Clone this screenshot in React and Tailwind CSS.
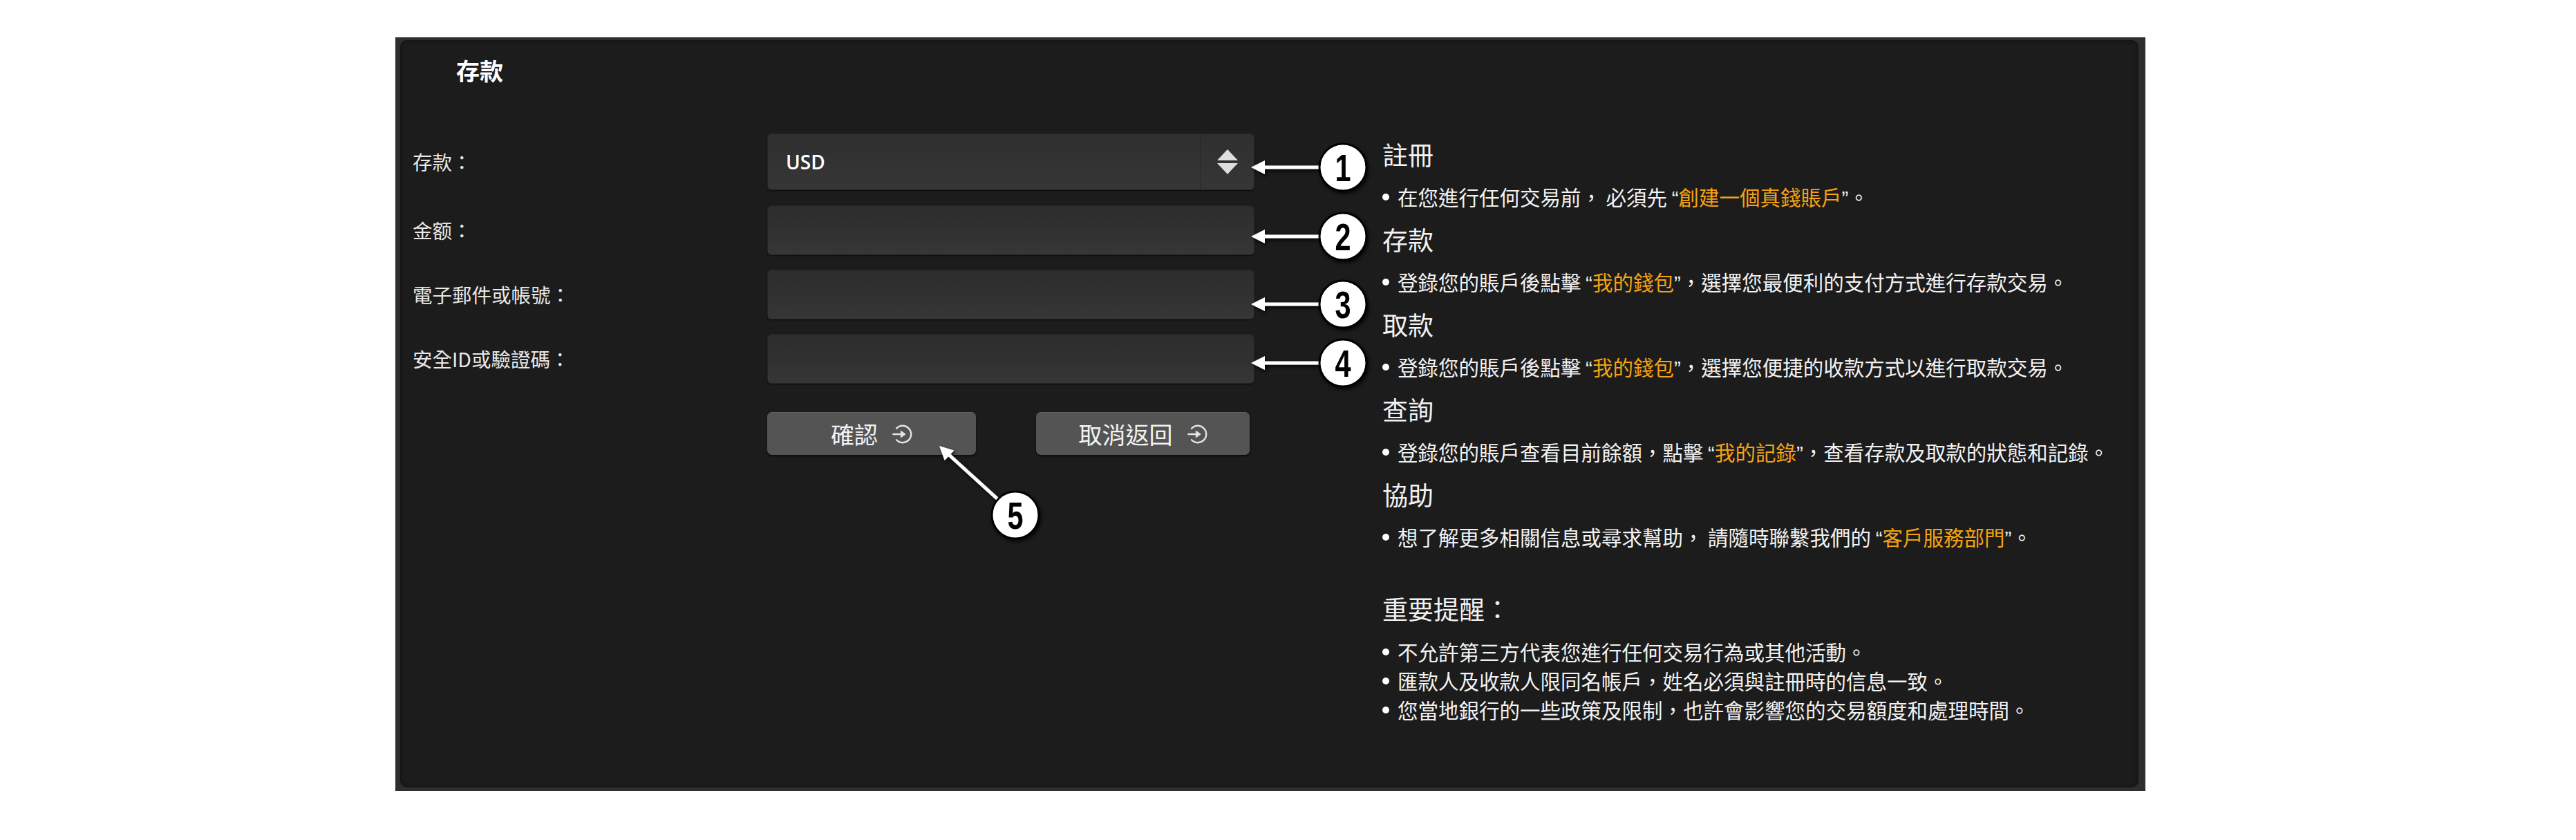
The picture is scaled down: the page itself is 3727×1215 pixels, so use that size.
const steps = [
  {
    title: '註冊',
    text: ['在您進行任何交易前， 必須先 ', '創建一個真錢賬戶', '。'],
  },
  {
    title: '存款',
    text: ['登錄您的賬戶後點擊 ', '我的錢包', '，選擇您最便利的支付方式進行存款交易。'],
  },
  {
    title: '取款',
    text: ['登錄您的賬戶後點擊 ', '我的錢包', '，選擇您便捷的收款方式以進行取款交易。'],
  },
  {
    title: '查詢',
    text: ['登錄您的賬戶查看目前餘額，點擊 ', '我的記錄', '，查看存款及取款的狀態和記錄。'],
  },
  {
    title: '協助',
    text: ['想了解更多相關信息或尋求幫助， 請隨時聯繫我們的 ', '客戶服務部門', '。'],
  },
];

const notes = [
  '不允許第三方代表您進行任何交易行為或其他活動。',
  '匯款人及收款人限同名帳戶，姓名必須與註冊時的信息一致。',
  '您當地銀行的一些政策及限制，也許會影響您的交易額度和處理時間。',
];

const fields = ['金额：', '電子郵件或帳號：', '安全ID或驗證碼：'];

// callout markers drawn over the screenshot
const marks = [
  { n: 1, cx: 1943, cy: 242 },
  { n: 2, cx: 1943, cy: 342 },
  { n: 3, cx: 1943, cy: 440 },
  { n: 4, cx: 1943, cy: 525 },
  { n: 5, cx: 1469, cy: 745 },
];

const EnterIcon = () => (
  <svg viewBox="0 0 32 32" className="w-[30px] h-[30px]" fill="none" stroke="#e4e4e4" strokeWidth="2.6" strokeLinecap="round">
    <path d="M7.5 7.2 A13 13 0 1 1 7.5 24.8" />
    <path d="M2.5 16 H17" />
    <path d="M14.5 11 L21.5 16 L14.5 21 Z" fill="#e4e4e4" strokeWidth="1" strokeLinejoin="round" />
  </svg>
);

const Bullet = ({ children }) => (
  <div className="flex items-center">
    <span className="w-[10px] h-[10px] rounded-full bg-white shrink-0" />
    <span className="ml-[12px]">{children}</span>
  </div>
);

const Q = ({ children }) => (
  <span className="font-['Liberation_Sans',sans-serif]">{children}</span>
);

const Annotations = () => (
  <svg className="absolute inset-0 pointer-events-none" width="3727" height="1215">
    <defs>
      <filter id="shade" x="-30%" y="-30%" width="160%" height="160%">
        <feDropShadow dx="2" dy="3" stdDeviation="2.5" floodColor="#000" floodOpacity="0.8" />
      </filter>
    </defs>
    <g filter="url(#shade)">
      {marks.slice(0, 4).map((m) => (
        <g key={m.n}>
          <line x1="1826" y1={m.cy} x2="1910" y2={m.cy} stroke="#fff" strokeWidth="5" />
          <polygon points={`1810,${m.cy} 1830,${m.cy - 10} 1830,${m.cy + 10}`} fill="#fff" />
        </g>
      ))}
      <line x1="1443" y1="721.5" x2="1371" y2="656" stroke="#fff" strokeWidth="5" />
      <polygon points="1359,645 1380.4,651.4 1366.7,666" fill="#fff" />
      {marks.map((m) => (
        <g key={m.n}>
          <circle cx={m.cx} cy={m.cy} r="34" fill="#fff" stroke="#000" strokeWidth="3" />
          <text
            transform={`translate(${m.cx} ${m.cy + 20}) scale(0.74 1)`}
            textAnchor="middle"
            fontFamily="Liberation Sans, Arial, sans-serif"
            fontWeight="700"
            fontSize="56"
            fill="#000"
          >
            {m.n}
          </text>
        </g>
      ))}
    </g>
  </svg>
);

export default function App() {
  return (
    <div className="relative w-[3727px] h-[1215px] bg-white overflow-hidden font-['Noto_Sans_CJK_TC','Noto_Sans_CJK_SC',sans-serif]">
      <div className="ml-[572px] mt-[54px] w-[2532px] h-[1090px] bg-[#2e2e2e] pt-[4px] pl-[7px] pr-[10px] pb-[5px]">
        <div className="h-full rounded-[10px] bg-[#1c1c1c] pt-[27px] pl-[18px] shadow-[inset_0_0_6px_rgba(0,0,0,0.5)]">
          <h1 className="pl-[63px] text-[34px] leading-[34px] font-bold text-white">存款</h1>

          <div className="mt-[74px] flex">
            {/* Form */}
            <div className="w-[1218px] shrink-0">
              <div className="flex items-center">
                <label className="w-[513px] text-[28.5px] text-[#e8e8e8]">存款：</label>
                <div className="w-[705px] h-[82px] flex rounded-[6px] border border-[#262626] bg-gradient-to-b from-[#2f2f2f] to-[#363636] shadow-[0_1px_2px_rgba(0,0,0,0.6)]">
                  <div className="flex-1 flex items-center pl-[26px] font-['Open_Sans',sans-serif] font-semibold text-[28px] text-white">
                    USD
                  </div>
                  <div className="w-[78px] border-l border-[#272727] flex flex-col items-center justify-center gap-[4px]">
                    <svg viewBox="0 0 30 16" className="w-[30px] h-[16px]"><polygon points="15,0 30,16 0,16" fill="#dedede" /></svg>
                    <svg viewBox="0 0 30 16" className="w-[30px] h-[16px]"><polygon points="0,0 30,0 15,16" fill="#dedede" /></svg>
                  </div>
                </div>
              </div>

              {fields.map((f, i) => (
                <div key={f} className={`flex items-center ${i === 0 ? 'mt-[22px]' : 'mt-[21px]'}`}>
                  <label className="w-[513px] text-[28.5px] text-[#e8e8e8]">{f}</label>
                  <div className="w-[705px] h-[72px] rounded-[6px] border border-[#262626] bg-gradient-to-b from-[#2c2c2c] to-[#363636] shadow-[0_1px_2px_rgba(0,0,0,0.6)]" />
                </div>
              ))}

              <div className="mt-[41px] pl-[513px] flex gap-[87px]">
                <button className="w-[302px] h-[62px] rounded-[7px] bg-[#545454] border-t border-[#616161] shadow-[0_2px_3px_rgba(0,0,0,0.6)] flex items-center justify-center gap-[20px] text-[34px] text-[#f2f2f2]">
                  確認 <EnterIcon />
                </button>
                <button className="w-[309px] h-[62px] rounded-[7px] bg-[#545454] border-t border-[#616161] shadow-[0_2px_3px_rgba(0,0,0,0.6)] flex items-center justify-center gap-[20px] text-[34px] text-[#f2f2f2]">
                  取消返回 <EnterIcon />
                </button>
              </div>
            </div>

            {/* Guide */}
            <div className="ml-[185px] text-[#f2f2f2]">
              {steps.map((s) => (
                <div key={s.title}>
                  <div className="h-[61.5px] flex items-center text-[37px]">{s.title}</div>
                  <div className="h-[61.5px] flex items-center text-[29.5px]">
                    <Bullet>
                      {s.text[0]}
                      <Q>“</Q>
                      <span className="text-[#f5a312]">{s.text[1]}</span>
                      <Q>”</Q>
                      {s.text[2]}
                    </Bullet>
                  </div>
                </div>
              ))}

              <div className="mt-[42px] h-[61.5px] flex items-center text-[37px]">重要提醒：</div>
              <div className="mt-[10px] text-[29.5px]">
                {notes.map((n) => (
                  <div key={n} className="h-[42px] flex items-center">
                    <Bullet>{n}</Bullet>
                  </div>
                ))}
              </div>
            </div>
          </div>
        </div>
      </div>
      <Annotations />
    </div>
  );
}
